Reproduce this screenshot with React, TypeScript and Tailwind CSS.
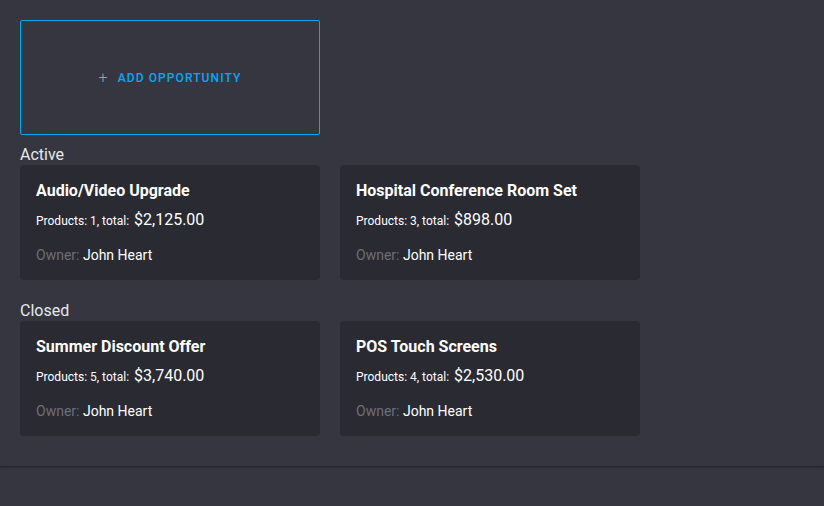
export default function App() {
  const groups = [
    {
      name: 'Active',
      items: [
        { title: 'Audio/Video Upgrade', products: 1, total: '$2,125.00', owner: 'John Heart' },
        { title: 'Hospital Conference Room Set', products: 3, total: '$898.00', owner: 'John Heart' },
      ],
    },
    {
      name: 'Closed',
      items: [
        { title: 'Summer Discount Offer', products: 5, total: '$3,740.00', owner: 'John Heart' },
        { title: 'POS Touch Screens', products: 4, total: '$2,530.00', owner: 'John Heart' },
      ],
    },
  ];

  return (
    <div className="flex h-[506px] w-[824px] flex-col bg-[#363640] font-['Roboto',sans-serif] text-[#e8e8ea]">
      <div className="flex flex-1 flex-col px-5 pt-5">
        <button
          type="button"
          className="flex h-[115px] w-[300px] items-center justify-center gap-[10px] rounded-[2px] border border-[#03a9f4] text-[#03a9f4]"
        >
          <span className="text-[16px] font-light leading-none text-[#9aa0aa]">+</span>
          <span className="text-[12px] font-medium tracking-[1.1px]">ADD OPPORTUNITY</span>
        </button>

        <div className="mt-[10px] flex flex-col gap-[21px]">
          {groups.map((g) => (
            <div key={g.name}>
              <div className="text-[16px] leading-[20px]">{g.name}</div>
              <div className="flex gap-5">
                {g.items.map((it) => (
                  <div key={it.title} className="h-[115px] w-[300px] rounded-[4px] bg-[#2a2a32] px-4 pt-[14px]">
                    <div className="text-[16px] font-bold leading-[24px] text-white">{it.title}</div>
                    <div className="mt-[5px] leading-[24px] text-white">
                      <span className="text-[12px]">Products: {it.products}, total: </span>
                      <span className="ml-[2px] text-[16px]">{it.total}</span>
                    </div>
                    <div className="mt-[12px] text-[14px] leading-[20px]">
                      <span className="text-[#6e6e76]">Owner: </span>
                      <span className="text-white">{it.owner}</span>
                    </div>
                  </div>
                ))}
              </div>
            </div>
          ))}
        </div>
      </div>
      <div className="h-[40px] border-t border-[#25252c] shadow-[inset_0_2px_2px_-1px_rgba(0,0,0,0.2)]" />
    </div>
  );
}
